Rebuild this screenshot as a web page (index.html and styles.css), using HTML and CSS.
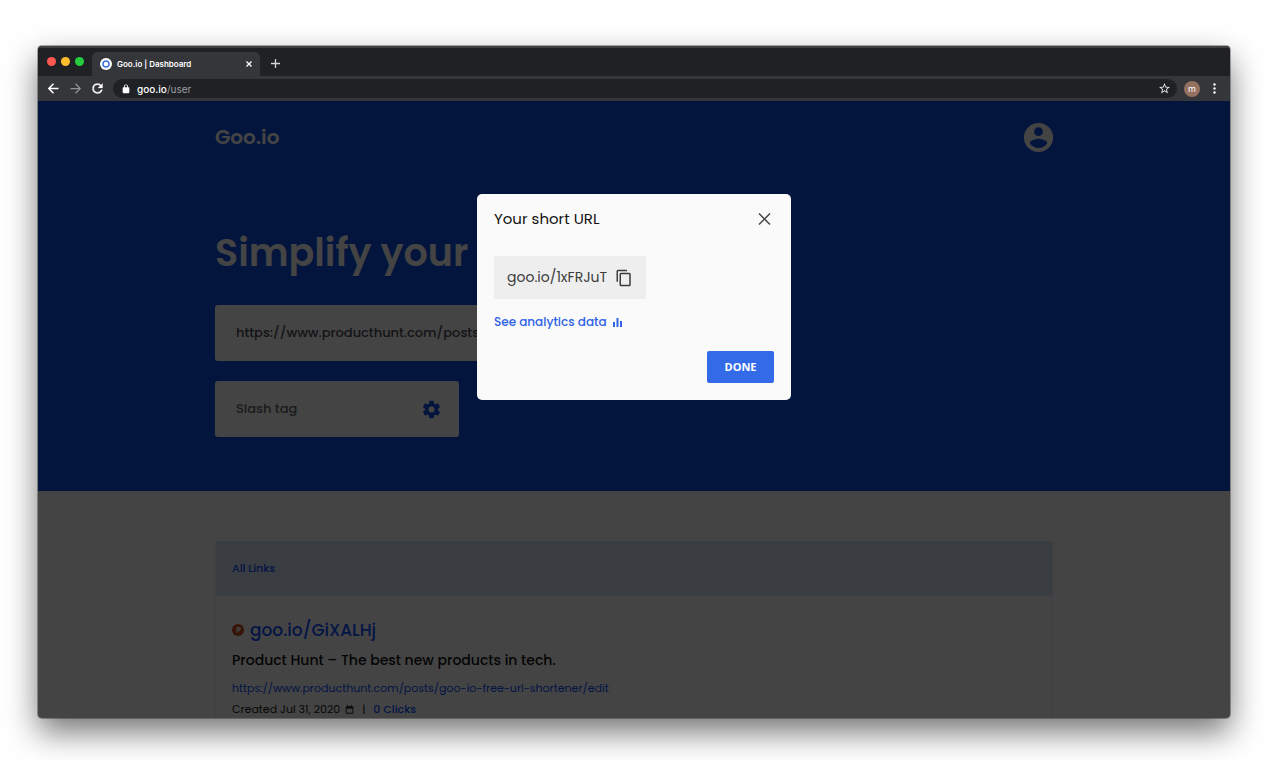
FILE: index.html
```html
<!DOCTYPE html>
<html lang="en">
<head>
    <meta charset="UTF-8">
    <meta name="viewport" content="width=device-width, initial-scale=1.0">
    <title>Goo.io | Dashboard</title>
    <link rel="stylesheet" href="styles.css">
</head>
<body>
    <div class="browser">
        <!-- Tab strip -->
        <div class="tab-strip">
            <div class="lights">
                <span class="light red"></span>
                <span class="light yellow"></span>
                <span class="light green"></span>
            </div>
            <div class="tab">
                <svg class="favicon" viewBox="0 0 12 12"><circle cx="6" cy="6" r="6" fill="#fff"/><circle cx="6" cy="6" r="3" fill="none" stroke="#3f6fe0" stroke-width="1.500"/></svg>
                <span class="tab-title">Goo.io | Dashboard</span>
                <button class="icon-btn" type="button" aria-label="Close tab">
                    <svg width="6" height="6" viewBox="0 0 6 6"><path d="M0.5 0.5L5.5 5.5M5.5 0.5L0.5 5.5" stroke="#fff" stroke-width="1.3"/></svg>
                </button>
            </div>
            <button class="icon-btn new-tab" type="button" aria-label="New tab">
                <svg width="9" height="9" viewBox="0 0 9 9"><path d="M4.5 0V9M0 4.5H9" stroke="#d5d6d8" stroke-width="1.3"/></svg>
            </button>
        </div>

        <!-- Toolbar -->
        <div class="toolbar">
            <button class="icon-btn nav-btn" type="button" aria-label="Back">
                <svg width="15" height="15" viewBox="0 0 24 24" fill="none" stroke="#fff" stroke-width="2.400"><path d="M20 12H5M12 4.500L4.500 12L12 19.500"/></svg>
            </button>
            <button class="icon-btn nav-btn" type="button" aria-label="Forward">
                <svg width="15" height="15" viewBox="0 0 24 24" fill="none" stroke="#919295" stroke-width="2"><path d="M4 12H19M12 4.500L19.500 12L12 19.500"/></svg>
            </button>
            <button class="icon-btn nav-btn" type="button" aria-label="Reload">
                <svg width="15" height="15" viewBox="0 0 24 24" fill="#fff"><path d="M17.65 6.35A7.96 7.96 0 0 0 12 4a8 8 0 1 0 7.73 10h-2.08A6 6 0 1 1 12 6c1.66 0 3.14.69 4.22 1.78L13 11h7V4l-2.35 2.35z" stroke="#fff" stroke-width="0.500"/></svg>
            </button>
            <div class="address">
                <svg width="10" height="10" viewBox="0 0 24 24" fill="#fff"><path d="M18 8h-1V6A5 5 0 0 0 7 6v2H6a2 2 0 0 0-2 2v10c0 1.100.9 2 2 2h12a2 2 0 0 0 2-2V10a2 2 0 0 0-2-2zM9 6a3 3 0 0 1 6 0v2H9z"/></svg>
                <span class="address-text"><b>goo.io</b>/user</span>
                <button class="icon-btn" type="button" aria-label="Bookmark">
                    <svg width="13" height="13" viewBox="0 0 24 24" fill="#e8eaed"><path d="M22 9.240l-7.190-.62L12 2 9.190 8.630 2 9.240l5.460 4.730L5.820 21 12 17.270 18.180 21l-1.630-7.030L22 9.240zM12 15.400l-3.760 2.270 1-4.280-3.320-2.880 4.380-.38L12 6.100l1.710 4.040 4.380.38-3.320 2.880 1 4.280L12 15.400z"/></svg>
                </button>
            </div>
            <span class="avatar">m</span>
            <button class="icon-btn menu" type="button" aria-label="Menu">
                <svg width="3" height="11" viewBox="0 0 3 11" fill="#fff"><circle cx="1.500" cy="1.500" r="1.200"/><circle cx="1.500" cy="5.500" r="1.200"/><circle cx="1.500" cy="9.500" r="1.200"/></svg>
            </button>
        </div>

        <div class="page">
            <header class="hero">
                <div class="container">
                    <nav class="navbar">
                        <a class="logo" href="#">Goo.io</a>
                        <button class="icon-btn" type="button" aria-label="Account">
                            <svg width="35" height="35" viewBox="0 0 24 24" fill="#fafafa"><path d="M12 2a10 10 0 1 0 0 20 10 10 0 0 0 0-20zm0 3a3 3 0 1 1 0 6 3 3 0 0 1 0-6zm0 14.200a7.200 7.200 0 0 1-6-3.220c.03-1.990 4-3.080 6-3.080 1.990 0 5.970 1.090 6 3.080a7.200 7.200 0 0 1-6 3.220z"/></svg>
                        </button>
                    </nav>
                    <h1>Simplify your</h1>
                    <form class="shorten">
                        <div class="field field-url">
                            <input type="text" aria-label="Long URL" value="https://www.producthunt.com/posts">
                        </div>
                        <div class="field field-tag">
                            <input type="text" aria-label="Slash tag" placeholder="Slash tag">
                            <button class="icon-btn" type="button" aria-label="Link settings">
                                <svg width="21" height="21" viewBox="0 0 24 24" fill="#0d4edf"><path d="M19.430 12.980c.04-.32.070-.64.070-.98s-.03-.66-.07-.98l2.110-1.650c.19-.15.240-.42.120-.64l-2-3.460c-.12-.22-.39-.3-.61-.22l-2.490 1c-.52-.4-1.080-.73-1.690-.98l-.38-2.650A.49.490 0 0 0 14 2h-4c-.25 0-.46.180-.49.420l-.38 2.650c-.61.250-1.170.59-1.690.98l-2.490-1c-.23-.09-.49 0-.61.220l-2 3.460c-.13.220-.07.490.120.640l2.110 1.650c-.04.320-.07.650-.07.980s.03.660.070.980l-2.110 1.650c-.19.150-.24.420-.12.640l2 3.460c.12.220.390.300.610.220l2.490-1c.52.400 1.080.730 1.690.980l.38 2.650c.03.240.240.420.490.420h4c.25 0 .46-.18.490-.42l.38-2.650c.61-.25 1.170-.59 1.690-.98l2.490 1c.23.090.490 0 .61-.22l2-3.460c.12-.22.070-.49-.12-.64l-2.110-1.650zM12 15.500a3.500 3.500 0 1 1 0-7 3.500 3.500 0 0 1 0 7z"/></svg>
                            </button>
                        </div>
                    </form>
                </div>
            </header>

            <main class="container">
                <section class="links">
                    <h2>All Links</h2>
                    <article class="link-item">
                        <div class="short-link">
                            <svg width="12" height="12" viewBox="0 0 12 12"><circle cx="6" cy="6" r="6" fill="#c9431c"/><path d="M4.500 9V3H6.800a2 2 0 0 1 0 4.200H5.500V9z" fill="#fafafa"/><circle cx="6.600" cy="5.100" r="0.700" fill="#c9431c"/></svg>
                            <a href="#">goo.io/GiXALHj</a>
                        </div>
                        <h3>Product Hunt – The best new products in tech.</h3>
                        <a class="long-link" href="#">https://www.producthunt.com/posts/goo-io-free-url-shortener/edit</a>
                        <div class="meta">
                            <span>Created Jul 31, 2020</span>
                            <svg width="9" height="9" viewBox="0 0 24 24" fill="none" stroke="#222"><path d="M3 5h18v17H3zM7 0v5M17 0v5" stroke-width="2.500"/><path d="M3 7h18" stroke-width="5"/></svg>
                            <span class="bar">|</span>
                            <a href="#">0 Clicks</a>
                        </div>
                    </article>
                </section>
            </main>

            <div class="overlay">
                <div class="dialog" role="dialog" aria-labelledby="dialog-title">
                    <div class="dialog-head">
                        <h2 id="dialog-title">Your short URL</h2>
                        <button class="icon-btn" type="button" aria-label="Close">
                            <svg width="20" height="20" viewBox="0 0 20 20"><path d="M5 4.500L16 15.500M16 4.500L5 15.500" stroke="#444" stroke-width="1.500"/></svg>
                        </button>
                    </div>
                    <div class="copy-box">
                        <span>goo.io/1xFRJuT</span>
                        <button class="icon-btn" type="button" aria-label="Copy">
                            <svg width="18" height="18" viewBox="0 0 24 24" fill="#3c3c3c"><path d="M16 1H4a2 2 0 0 0-2 2v14h2V3h12V1zm3 4H8a2 2 0 0 0-2 2v14c0 1.100.9 2 2 2h11a2 2 0 0 0 2-2V7a2 2 0 0 0-2-2zm0 16H8V7h11v14z"/></svg>
                        </button>
                    </div>
                    <a class="analytics" href="#">See analytics data
                        <svg width="9" height="9" viewBox="0 0 9 9" fill="#2f62e6"><rect x="0" y="4" width="2" height="5"/><rect x="3.500" y="0" width="2" height="9"/><rect x="7" y="3" width="2" height="6"/></svg>
                    </a>
                    <button class="done" type="button">DONE</button>
                </div>
            </div>
        </div>
    </div>
</body>
</html>
```
FILE: styles.css
```css
* {
    box-sizing: border-box;
}
body {
    margin: 0;
    height: 100vh;
    padding: 46px 40px 42px 38px;
    background-color: #fff;
    font-family: Poppins, Inter, "Open Sans", sans-serif;
    overflow: hidden;
}
h1, h2, h3 {
    margin: 0;
}
a {
    color: #0d4eff;
    text-decoration: none;
}
.icon-btn {
    display: flex;
    padding: 0;
    border: 0;
    background: none;
    cursor: pointer;
}

/* Browser window */
.browser {
    display: flex;
    flex-direction: column;
    height: 100%;
    border-radius: 4px;
    background-color: #202124;
    overflow: hidden;
    box-shadow: 0 0 0 1px rgba(0, 0, 0, 0.3), 0 14px 32px rgba(0, 0, 0, 0.55);
}
.tab-strip {
    display: flex;
    align-items: flex-end;
    height: 30px;
    border-top: 2px solid #3e4042;
}
.lights {
    display: flex;
    align-self: center;
    gap: 5px;
    padding: 0 8px 2px 9px;
}
.light {
    width: 9px;
    height: 9px;
    border-radius: 50%;
}
.red {
    background-color: #ff5850;
}
.yellow {
    background-color: #ffbf2d;
}
.green {
    background-color: #26cc40;
}
.tab {
    display: flex;
    align-items: center;
    gap: 5px;
    width: 168px;
    height: 24px;
    padding: 0 8px;
    border-radius: 5px 5px 0 0;
    background-color: #35363a;
    color: #fff;
    font-family: Inter, sans-serif;
    font-size: 8px;
    font-weight: 600;
}
.favicon {
    width: 12px;
    height: 12px;
}
.tab-title {
    flex: 1;
}
.new-tab {
    padding: 8px 11px;
}
.toolbar {
    display: flex;
    align-items: center;
    height: 25px;
    padding: 0 12px 0 8px;
    background-color: #35363a;
    font-family: Inter, sans-serif;
}
.nav-btn {
    width: 22px;
}
.address {
    display: flex;
    flex: 1;
    align-items: center;
    gap: 6px;
    height: 19px;
    margin-left: 1px;
    padding: 0 6px 0 8px;
    border-radius: 10px;
    background-color: #202124;
}
.address-text {
    flex: 1;
    color: #9aa0a6;
    font-size: 10px;
    line-height: 18px;
}
.address-text b {
    color: #fff;
    font-weight: 500;
}
.avatar {
    width: 16px;
    height: 16px;
    margin: 0 13px 0 7px;
    border-radius: 50%;
    background-color: #93705f;
    color: #fff;
    font-size: 9px;
    line-height: 15px;
    text-align: center;
}
.menu {
    width: 5px;
}

/* Dashboard */
.page {
    position: relative;
    flex: 1;
    min-height: 0;
    background-color: #fafafa;
    overflow: hidden;
}
.container {
    max-width: 838px;
    margin: 0 auto;
}
.hero {
    padding-bottom: 54px;
    background-color: #0d4edf;
}
.navbar {
    display: flex;
    align-items: center;
    justify-content: space-between;
    height: 72px;
    margin-right: -3px;
}
.logo {
    color: #fafafa;
    font-size: 20px;
    font-weight: 600;
}
h1 {
    padding: 50px 0 22px;
    color: #fafafa;
    font-size: 38px;
    font-weight: 600;
    line-height: 60px;
}
.shorten {
    display: grid;
    gap: 20px;
}
.field {
    display: flex;
    align-items: center;
    height: 56px;
    padding: 0 17px 0 21px;
    border-radius: 3px;
    background-color: #fafafa;
}
.field-url {
    max-width: 560px;
}
.field-tag {
    width: 244px;
}
.field input {
    flex: 1;
    min-width: 0;
    padding: 0;
    border: 0;
    outline: 0;
    background: none;
    color: #4a4a55;
    font-family: inherit;
    font-size: 13px;
    font-weight: 500;
}
.field input::placeholder {
    color: #666;
    opacity: 1;
}
.links {
    margin-top: 50px;
    border: 1px solid #e4ebfa;
    border-top: 0;
}
.links h2 {
    padding: 0 16px;
    background-color: #d6e1f3;
    color: #0d4eff;
    font-size: 11px;
    font-weight: 500;
    line-height: 55px;
}
.link-item {
    padding: 20px 16px;
}
.short-link {
    display: flex;
    align-items: center;
    gap: 6px;
    font-size: 17px;
    font-weight: 500;
    line-height: 28px;
}
h3 {
    color: #111;
    font-size: 14px;
    font-weight: 500;
    line-height: 32px;
}
.long-link {
    display: block;
    font-size: 11px;
    line-height: 24px;
}
.meta {
    display: flex;
    align-items: center;
    gap: 5px;
    color: #222;
    font-size: 11px;
    line-height: 18px;
}
.meta a {
    font-weight: 500;
}
.bar {
    padding: 0 3px;
}

/* Dialog */
.overlay {
    position: absolute;
    inset: 0;
    padding-top: 93px;
    background-color: rgba(0, 0, 0, 0.73);
}
.dialog {
    display: flex;
    flex-direction: column;
    align-items: flex-start;
    width: 314px;
    margin: 0 auto;
    padding: 15px 17px 17px;
    border-radius: 5px;
    background-color: #fafafa;
}
.dialog-head {
    display: flex;
    align-items: center;
    justify-content: space-between;
    align-self: stretch;
    margin-bottom: 27px;
}
.dialog h2 {
    color: #111;
    font-size: 15px;
    font-weight: 400;
    line-height: 20px;
}
.copy-box {
    display: flex;
    align-items: center;
    gap: 8px;
    height: 43px;
    padding: 0 13px;
    background-color: #eee;
    color: #3c3c3c;
    font-size: 14px;
}
.analytics {
    display: flex;
    align-items: center;
    gap: 6px;
    margin: 12px 0 18px;
    color: #2f62e6;
    font-size: 12px;
    font-weight: 500;
    line-height: 22px;
}
.done {
    align-self: flex-end;
    width: 67px;
    height: 32px;
    padding: 0 0 2px;
    border: 0;
    border-radius: 2px;
    background-color: #336ae8;
    color: #fff;
    font-family: "Open Sans", sans-serif;
    font-size: 11px;
    font-weight: 700;
    cursor: pointer;
}
```
